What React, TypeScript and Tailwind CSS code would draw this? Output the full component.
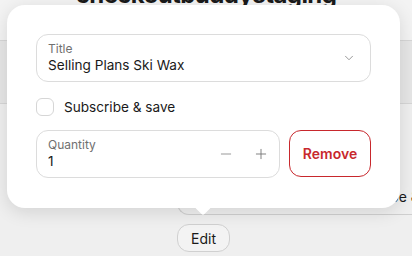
import { ChevronDown, Minus, Plus } from "lucide-react";

export default function App() {
  return (
    <div
      className="relative h-[256px] w-[412px] overflow-hidden bg-[#efefef] text-[#1a1a1a]"
      style={{ fontFamily: "Inter, 'Noto Sans', sans-serif" }}
    >
      {/* page behind the popover */}
      <div className="flex h-[40px] justify-center bg-[#f3f3f3]">
        <h1 className="-mt-[17px] text-[24px] font-bold leading-[24px] tracking-tight">checkoutbuddystaging</h1>
      </div>
      <div className="h-[64px] border-y border-[#d6d6d6] bg-[#e6e6e6]" />
      <div className="ml-[177px] mt-[74px] flex h-[37px] items-center rounded-bl-[12px] border-b border-l border-[#cfcfcf] pl-[138px]">
        <span className="h-[16px] w-[16px] rounded-[5px] border border-[#bdbdbd] bg-white" />
        <span className="ml-[22px] whitespace-nowrap text-[14px]">Subscribe &amp; save</span>
      </div>
      <div className="ml-[177px] mt-[9px] flex h-[28px] w-[53px] items-center justify-center rounded-[12px] border border-[#d0d0d0] bg-[#f3f3f3] text-[14px]">
        Edit
      </div>

      {/* popover */}
      <div className="absolute left-[7px] top-[5px] w-[393px] rounded-[18px] bg-white px-[29px] pb-[30px] pt-[29px] shadow-[0_4px_18px_rgba(0,0,0,0.12)]">
        <div className="flex h-[48px] items-center rounded-[12px] border border-[#dcdcdc] pl-[11px] pr-[14px]">
          <div className="flex-1">
            <div className="text-[12px] leading-[14px] text-[#707070]">Title</div>
            <div className="text-[13.6px] leading-[18px]">Selling Plans Ski Wax</div>
          </div>
          <ChevronDown size={14} strokeWidth={1.5} className="text-[#8a8a8a]" />
        </div>

        <label className="mt-[15px] flex h-[20px] items-center gap-[10px]">
          <span className="h-[18px] w-[18px] rounded-[6px] border border-[#d6d6d6]" />
          <span className="text-[13.6px]">Subscribe &amp; save</span>
        </label>

        <div className="mt-[13px] flex gap-[9px]">
          <div className="flex h-[48px] flex-1 items-center rounded-[12px] border border-[#dcdcdc] pl-[11px] pr-[10px]">
            <div className="flex-1">
              <div className="text-[12px] leading-[14px] text-[#707070]">Quantity</div>
              <div className="text-[13.6px] leading-[18px]">1</div>
            </div>
            <Minus size={16} strokeWidth={1.3} className="mr-[19px] text-[#8a8a8a]" />
            <Plus size={16} strokeWidth={1.3} className="text-[#6f6f6f]" />
          </div>
          <button className="h-[47px] w-[82px] rounded-[12px] border border-[#c8282d] text-[14px] font-semibold text-[#c8282d]">
            Remove
          </button>
        </div>
        <div className="absolute bottom-[-5px] left-[190px] h-[12px] w-[12px] rotate-45 rounded-[2px] bg-white" />
      </div>
    </div>
  );
}
